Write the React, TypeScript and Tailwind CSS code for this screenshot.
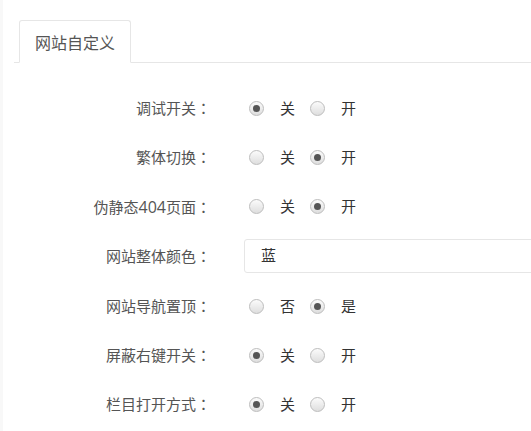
import React from "react";

type Opt = { label: string; checked: boolean };

function Radio({ checked }: { checked: boolean }) {
  return (
    <span className="flex h-[15px] w-[15px] shrink-0 items-center justify-center rounded-full border border-[#bdbdbd] bg-gradient-to-b from-[#fbfbfb] to-[#dedede]">
      {checked && <span className="h-[7px] w-[7px] rounded-full bg-[#555555]" />}
    </span>
  );
}

function Label({ children }: { children: React.ReactNode }) {
  return (
    <div className="w-[197px] shrink-0 text-right text-[15px] text-[#555555]">
      {children}
      <span style={{ fontFamily: '"Noto Sans CJK TC", sans-serif' }}>：</span>
    </div>
  );
}

function RadioRow({ label, opts }: { label: React.ReactNode; opts: Opt[] }) {
  return (
    <div className="flex h-[49px] items-center">
      <Label>{label}</Label>
      <div className="ml-[38px] flex items-center">
        <Radio checked={opts[0].checked} />
        <span className="ml-[16px] text-[15px] text-[#333333]">{opts[0].label}</span>
        <div className="ml-[15px] flex items-center">
          <Radio checked={opts[1].checked} />
        </div>
        <span className="ml-[16px] text-[15px] text-[#333333]">{opts[1].label}</span>
      </div>
    </div>
  );
}

export default function App() {
  const off = (onFirst: boolean): Opt[] => [
    { label: "关", checked: onFirst },
    { label: "开", checked: !onFirst },
  ];
  return (
    <div
      className="flex h-[431px] w-[531px] overflow-hidden bg-white"
      style={{ fontFamily: '"Noto Sans CJK SC", "Noto Sans", sans-serif' }}
    >
      <div className="w-[3px] shrink-0 bg-[#f8f8f8]" />
      <div className="flex-1 pl-[11px] pt-[20px]">
        <div className="flex h-[43px] border-b border-[#e6e6e6]">
          <div className="-mb-px ml-[5px] flex h-[43px] w-[112px] items-center justify-center rounded-t-[3px] border border-[#e6e6e6] border-b-white bg-white text-[16px] text-[#555555]">
            网站自定义
          </div>
        </div>
        <div className="pt-[21px]">
          <RadioRow label="调试开关" opts={off(true)} />
          <RadioRow label="繁体切换" opts={off(false)} />
          <RadioRow
            label={
              <>
                伪静态
                <span className="text-[16px]" style={{ fontFamily: '"Open Sans", sans-serif' }}>
                  404
                </span>
                页面
              </>
            }
            opts={off(false)}
          />
          <div className="flex h-[51px] items-center">
            <Label>网站整体颜色</Label>
            <div className="-mt-[2px] ml-[33px] flex h-[34px] w-[320px] shrink-0 items-center rounded-[3px] border border-[#e6e6e6] bg-white pl-[16px] text-[15px] text-[#333333]">
              蓝
            </div>
          </div>
          <RadioRow
            label="网站导航置顶"
            opts={[
              { label: "否", checked: false },
              { label: "是", checked: true },
            ]}
          />
          <RadioRow label="屏蔽右键开关" opts={off(true)} />
          <RadioRow label="栏目打开方式" opts={off(true)} />
        </div>
      </div>
    </div>
  );
}
